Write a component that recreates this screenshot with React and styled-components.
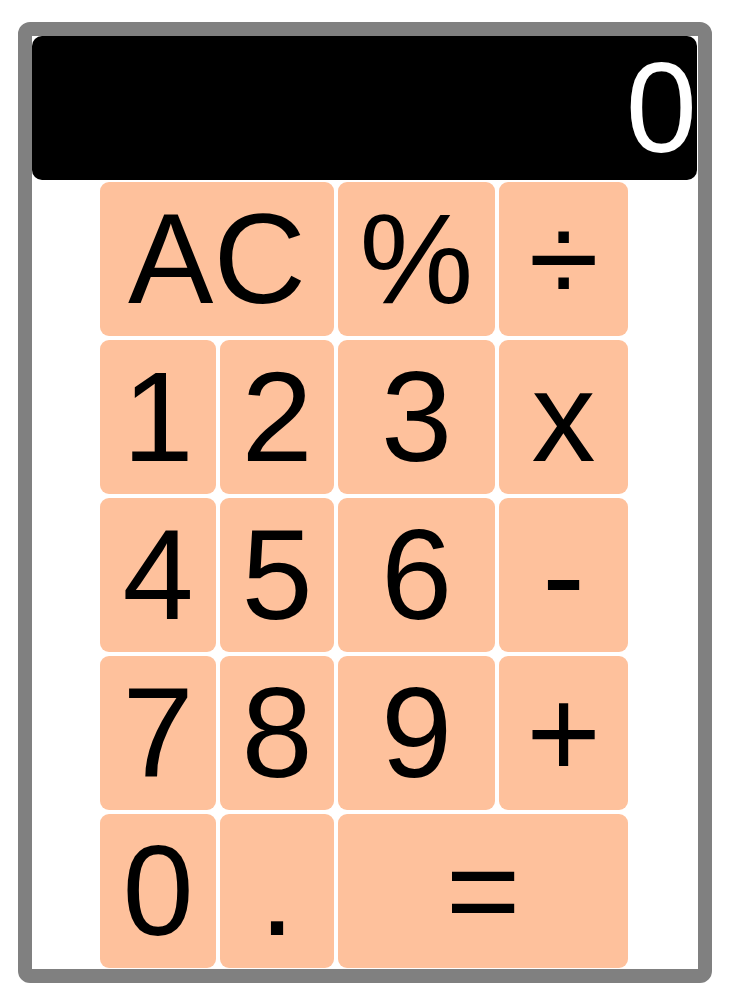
import styled, { createGlobalStyle } from 'styled-components';

const GlobalStyle = createGlobalStyle`
  body {
    margin: 0;
    background: #ffffff;
    font-family: "Liberation Sans", Arial, sans-serif;
  }
`;

const keys = [
  { label: 'AC', span: 2 },
  { label: '%' },
  { label: '÷' },
  { label: '1' },
  { label: '2' },
  { label: '3' },
  { label: 'x' },
  { label: '4' },
  { label: '5' },
  { label: '6' },
  { label: '-' },
  { label: '7' },
  { label: '8' },
  { label: '9' },
  { label: '+' },
  { label: '0' },
  { label: '.' },
  { label: '=', span: 2 },
];

const App = () => {
  return (
    <Page>
      <GlobalStyle />
      <Calculator>
        <Display>0</Display>
        <Keypad>
          {keys.map((k) => (
            <Key key={k.label} $span={k.span}>{k.label}</Key>
          ))}
        </Keypad>
      </Calculator>
    </Page>
  );
}

export default App;


const Page = styled.div`
  padding: 22px 20px 21px 18px;
  box-sizing: border-box;
  width: 732px;
`;

const Calculator = styled.div`
  width: 694px;
  height: 961px;
  box-sizing: border-box;
  border: 14px solid #808080;
  border-radius: 12px;
  background: #ffffff;
  display: flex;
  flex-direction: column;
  align-items: stretch;
`;

const Display = styled.div`
  height: 144px;
  margin-right: 1px;
  background: #000000;
  color: #ffffff;
  border-radius: 10px;
  font-size: 128px;
  line-height: 144px;
  text-align: right;
  padding-right: 0;
  overflow: hidden;
`;

const Keypad = styled.div`
  margin: 2px 0 0 68px;
  align-self: flex-start;
  display: grid;
  grid-template-columns: 116px 114px 157px 129px;
  grid-auto-rows: 154px;
  gap: 4px;
`;

const Key = styled.button`
  grid-column: span ${(p) => p.$span || 1};
  border: none;
  padding: 0;
  margin: 0;
  background: #fec19c;
  border-radius: 9px;
  color: #000000;
  font-family: "Liberation Sans", Arial, sans-serif;
  font-size: 128px;
  line-height: 1;
  display: flex;
  align-items: center;
  justify-content: center;
  cursor: pointer;
`;
